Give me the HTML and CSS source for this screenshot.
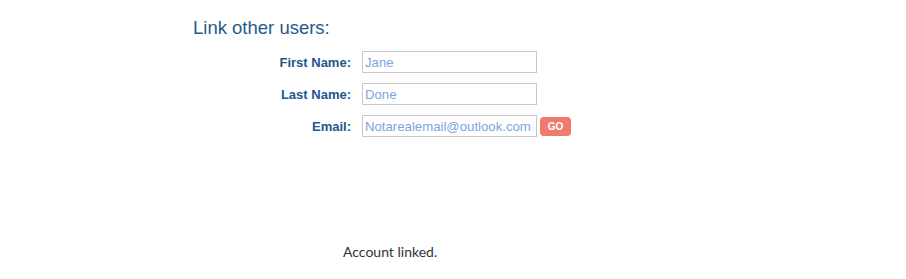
FILE: index.html
```html
<!DOCTYPE html>
<html lang="en">
<head>
    <meta charset="UTF-8">
    <meta name="viewport" content="width=device-width, initial-scale=1.0">
    <title>Link other users</title>
    <link rel="stylesheet" href="styles.css">
</head>
<body>
    <div class="container">
        <h2>Link other users:</h2>
        <!-- form rows -->
        <div class="link-form">
            <label class="label" for="first">First Name:</label>
            <div class="field"><input type="text" id="first" class="input" value="Jane"></div>

            <label class="label" for="last">Last Name:</label>
            <div class="field"><input type="text" id="last" class="input" value="Done"></div>

            <label class="label" for="email">Email:</label>
            <div class="field">
                <input type="text" id="email" class="input" value="Notarealemail@outlook.com">
                <button class="go">Go</button>
            </div>
        </div>
        <p class="status">Account linked.</p>
    </div>
</body>
</html>
```

FILE: styles.css
```css
body {
    margin: 0;
    font-family: 'Liberation Sans', Arial, sans-serif;
    background: #fff;
}

.container {
    padding: 17px 0 0 193px;
}

h2 {
    margin: 0 0 12px 0;
    font-size: 18.5px;
    font-weight: 400;
    color: #275a8c;
}

.link-form {
    display: grid;
    grid-template-columns: 158px auto;
    column-gap: 11px;
    row-gap: 10px;
    align-items: center;
}

.label {
    text-align: right;
    font-size: 13px;
    font-weight: 700;
    color: #1a5890;
}

.field {
    display: flex;
    align-items: center;
    gap: 3px;
}

.input {
    box-sizing: border-box;
    width: 175px;
    height: 22px;
    padding: 1px 2px;
    border: 1px solid #c8c8c8;
    font-family: 'Liberation Sans', Arial, sans-serif;
    font-size: 13.2px;
    color: #7aa5de;
    outline: none;
}

.go {
    height: 19px;
    width: 31px;
    padding: 0;
    border: none;
    border-radius: 4px;
    background-color: #f07a6e;
    color: #fff;
    font-family: 'Liberation Sans', Arial, sans-serif;
    font-size: 10px;
    font-weight: 700;
    text-transform: uppercase;
    cursor: pointer;
}

.status {
    margin: 106px 0 0 150px;
    font-family: Lato, sans-serif;
    font-size: 14px;
    color: #333;
}
```
